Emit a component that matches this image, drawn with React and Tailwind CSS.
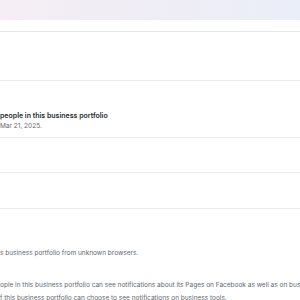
export default function App() {
  return (
    <div className="w-[300px] h-[300px] overflow-hidden bg-white font-['Inter','Liberation_Sans',sans-serif]">
      <div className="h-[20px] bg-gradient-to-r from-[#f5eef4] via-[#efedf6] to-[#eaeef8]" />
      <div className="h-[12px] border-b border-[#e3e6ea]" />
      <div className="h-[49px] border-b border-[#ebebeb]" />
      <div className="h-[57px] border-b border-[#ebebeb] pt-[30px] whitespace-nowrap">
        <p className="text-[7px] leading-[10px] font-semibold text-[#1c2b33]">people in this business portfolio</p>
        <p className="text-[6.5px] leading-[10px] text-[#65676b]">Mar 21, 2025.</p>
      </div>
      <div className="h-[35px] border-b border-[#ebebeb]" />
      <div className="h-[36px] border-b border-[#ebebeb]" />
      <div className="pt-[39px] whitespace-nowrap text-[6.5px] text-[#606770]">
        <p className="leading-[10px]">s business portfolio from unknown browsers.</p>
        <div className="mt-[21px] leading-[13px]">
          <p>ople in this business portfolio can see notifications about its Pages on Facebook as well as on business</p>
          <p>f this business portfolio can choose to see notifications on business tools.</p>
        </div>
      </div>
    </div>
  );
}
